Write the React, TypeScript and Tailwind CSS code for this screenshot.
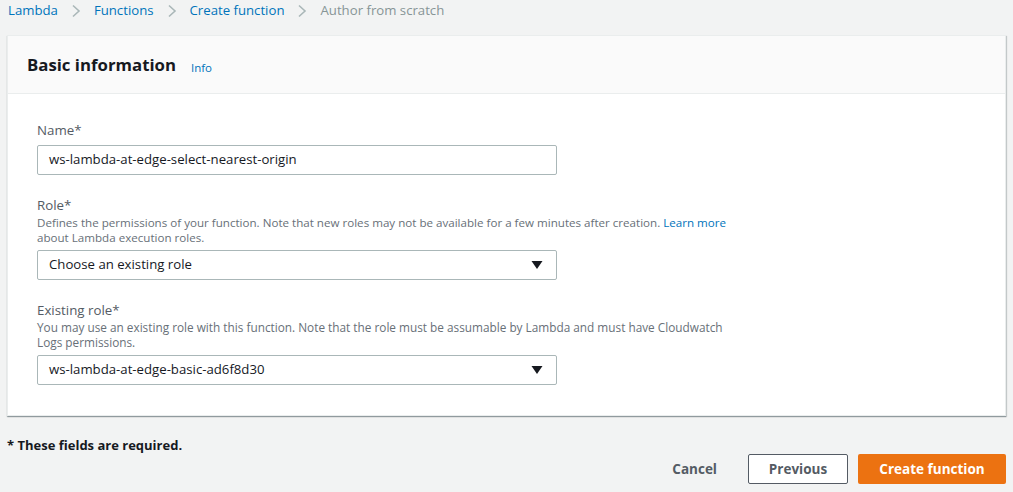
import React from "react";

const Chevron = () => (
  <svg width="10" height="14" viewBox="0 0 10 14" className="mx-[13px]" fill="none">
    <path d="M2 1.5 L8 7 L2 12.5" stroke="#aab7b8" strokeWidth="1.6" />
  </svg>
);

const Caret = () => (
  <svg width="12" height="10" viewBox="0 0 12 10">
    <path d="M0.5 1 H11.5 L6 9 Z" fill="#16191f" />
  </svg>
);

export default function App() {
  return (
    <div
      className="w-[1013px] h-[492px] bg-[#f2f3f3] overflow-hidden text-[#16191f]"
      style={{ fontFamily: '"Open Sans", "Noto Sans", sans-serif' }}
    >
      <nav className="flex items-center h-[21px] pl-[8px] text-[13.2px] leading-[21px]">
        <span className="text-[#0073bb]">Lambda</span>
        <Chevron />
        <span className="text-[#0073bb]">Functions</span>
        <Chevron />
        <span className="text-[#0073bb]">Create function</span>
        <Chevron />
        <span className="text-[#879596]">Author from scratch</span>
      </nav>

      <section className="ml-[7px] mt-[14px] w-[999px] bg-white border border-[#eaeded] shadow-[0_1px_1px_0_rgba(0,28,36,0.3),1px_1px_1px_0_rgba(0,28,36,0.15)]">
        <header className="h-[58px] bg-[#fafafa] border-b border-[#eaeded] flex items-center pl-[19px]">
          <h2 className="text-[16.8px] font-bold leading-[22px]">Basic information</h2>
          <span className="ml-[15px] mt-[6px] text-[11.5px] text-[#0073bb]">Info</span>
        </header>

        <div className="pl-[29px] pt-[26px] pb-[30px]">
          <div className="text-[13.3px] leading-[20px] text-[#545b64]">Name*</div>
          <div className="mt-[5px] w-[520px] h-[30px] border border-[#aab7b8] rounded-[2px] flex items-center pl-[11px] text-[13.2px]">
            ws-lambda-at-edge-select-nearest-origin
          </div>

          <div className="mt-[20px] text-[13.3px] leading-[20px] text-[#545b64]">Role*</div>
          <div className="w-[700px] text-[11.6px] leading-[15px] text-[#687078]">
            Defines the permissions of your function. Note that new roles may not be available for a few minutes after creation.{" "}
            <span className="text-[#0073bb]">Learn more</span> about Lambda execution roles.
          </div>
          <div className="mt-[5px] w-[520px] h-[30px] border border-[#aab7b8] rounded-[2px] flex items-center justify-between pl-[11px] pr-[13px] text-[13.2px]">
            <span>Choose an existing role</span>
            <Caret />
          </div>

          <div className="mt-[20px] text-[13.3px] leading-[20px] text-[#545b64]">Existing role*</div>
          <div className="w-[700px] text-[11.8px] leading-[15px] text-[#687078]">
            You may use an existing role with this function. Note that the role must be assumable by Lambda and must have Cloudwatch Logs permissions.
          </div>
          <div className="mt-[5px] w-[520px] h-[30px] border border-[#aab7b8] rounded-[2px] flex items-center justify-between pl-[11px] pr-[13px] text-[13.2px]">
            <span>ws-lambda-at-edge-basic-ad6f8d30</span>
            <Caret />
          </div>
        </div>
      </section>

      <div className="pl-[7px] mt-[20px] text-[13px] font-bold leading-[18px]">* These fields are required.</div>

      <div className="flex justify-end items-center pr-[7px]">
        <button className="text-[13.5px] font-bold text-[#545b64] mr-[31px]">Cancel</button>
        <button className="w-[100px] h-[30px] border border-[#545b64] rounded-[2px] bg-white text-[13.5px] font-bold text-[#545b64] mr-[10px]">
          Previous
        </button>
        <button className="w-[148px] h-[30px] rounded-[2px] bg-[#ec7211] text-[13.5px] font-bold text-white">
          Create function
        </button>
      </div>
    </div>
  );
}
